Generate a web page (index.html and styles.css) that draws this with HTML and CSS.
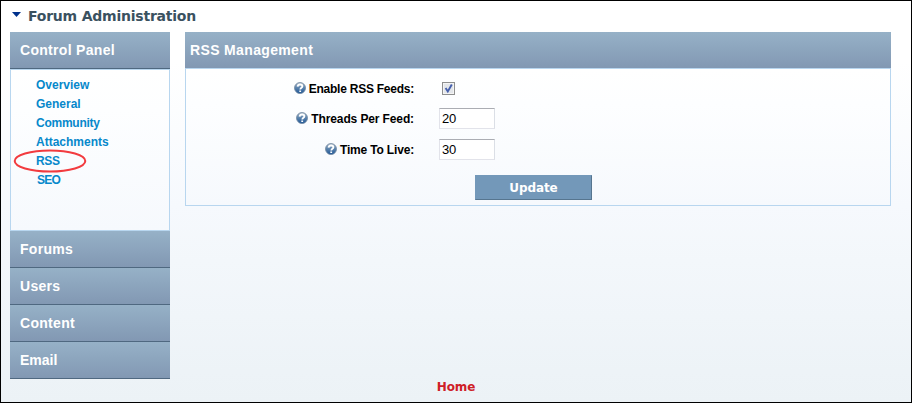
FILE: index.html
```html
<!DOCTYPE html>
<html lang="en">
<head>
<meta charset="utf-8">
<title>Forum Administration</title>
<link rel="stylesheet" href="styles.css">
</head>
<body>
<svg width="0" height="0" class="defs" aria-hidden="true">
  <defs>
    <linearGradient id="ball" x1="0" y1="0" x2="0" y2="1">
      <stop offset="0" stop-color="#b3c0cc"/>
      <stop offset=".4" stop-color="#668bb1"/>
      <stop offset="1" stop-color="#1c5596"/>
    </linearGradient>
    <symbol id="help" viewBox="0 0 12 12">
      <circle cx="6" cy="6" r="5.5" fill="url(#ball)" stroke="#71889f" stroke-width=".8"/>
      <path d="M3.6 4.6C3.8 3 4.8 2.5 6.1 2.5c1.4 0 2.3.7 2.3 1.8 0 1.5-2.1 1.5-2.1 3.2M6.2 8.5v1.5" fill="none" stroke="#fff" stroke-width="1.8"/>
    </symbol>
  </defs>
</svg>
<div class="page">
  <h1 class="title"><svg class="arrow" width="9" height="5" viewBox="0 0 9 5"><path d="M0 0h9L4.5 5z" fill="#00318c"/></svg><span>Forum Administration</span></h1>
  <div class="columns">
    <nav class="sidebar">
      <div class="bar">Control Panel</div>
      <ul class="menu">
        <li><a>Overview</a></li>
        <li><a>General</a></li>
        <li><a class="community">Community</a></li>
        <li><a>Attachments</a></li>
        <li class="marked"><a class="rss">RSS</a>
          <svg class="ring" width="74" height="24" viewBox="0 0 74 24"><ellipse cx="37" cy="12" rx="35.3" ry="10.5" fill="none" stroke="#f23b3f" stroke-width="2"/></svg></li>
        <li><a class="seo">SEO</a></li>
      </ul>
      <div class="bar">Forums</div>
      <div class="bar">Users</div>
      <div class="bar">Content</div>
      <div class="bar email">Email</div>
    </nav>
    <main class="panel">
      <h2 class="panel-head">RSS Management</h2>
      <form class="panel-body">
        <div class="row row-check">
          <label><svg class="help"><use href="#help"/></svg><span class="enable">Enable RSS Feeds:</span></label>
          <span class="check"><svg width="13" height="13" viewBox="0 0 13 13"><path d="M3.6 6l2.2 3.4L9.8 2.5" fill="none" stroke="#4660ad" stroke-width="1.9"/></svg></span>
        </div>
        <div class="row">
          <label><svg class="help"><use href="#help"/></svg><span class="threads">Threads Per Feed:</span></label>
          <input type="text" value="20">
        </div>
        <div class="row">
          <label><svg class="help"><use href="#help"/></svg><span class="time">Time To Live:</span></label>
          <input type="text" value="30">
        </div>
        <button type="button" class="update">Update</button>
      </form>
    </main>
  </div>
  <footer><a>Home</a></footer>
</div>
</body>
</html>
```
FILE: styles.css
```css
* { box-sizing: border-box; }
body { margin: 0; font-family: "Liberation Sans", Arial, sans-serif; }
.defs { position: absolute; }
.page {
  width: 912px;
  height: 403px;
  border: 1px solid #000;
  padding: 0 9px;
  display: flex;
  flex-direction: column;
  background: linear-gradient(#fff 0, #fff 60px, #f6f9fd 205px, #edf3f7 370px, #ecf2f6 100%);
}
.title {
  margin: 0;
  height: 31px;
  display: flex;
  align-items: flex-start;
  padding: 1px 0 0 2px;
  font: bold 14px/28px "DejaVu Sans", Verdana, sans-serif;
  color: #3a515f;
  letter-spacing: -0.22px;
  white-space: nowrap;
}
.arrow { margin: 10px 7px 0 0; }
.columns { display: flex; gap: 15px; height: 347px; align-items: flex-start; }
.sidebar { width: 160px; }
.bar {
  height: 37px;
  padding-left: 10px;
  border-bottom: 1px solid #4f6880;
  background: linear-gradient(#96b1c7, #8298b3);
  color: #fff;
  font: bold 14px/36px "Liberation Sans", Arial, sans-serif;
  letter-spacing: 0.3px;
}
.email { letter-spacing: 0; }
.menu {
  list-style: none;
  margin: 0;
  height: 162px;
  padding: 6px 0 0 25px;
  border: 1px solid #b8d6ef;
  background: linear-gradient(#fff, #fdfeff 40px, #f6f9fd);
}
.menu li { height: 19px; font: bold 12px/19px "Liberation Sans", Arial, sans-serif; color: #0788cb; }
.community { letter-spacing: -0.25px; }
.rss, .seo { letter-spacing: -0.3px; }
.seo { padding-left: 1px; letter-spacing: -0.7px; }
.marked { position: relative; }
.ring { position: absolute; left: -23px; top: -3px; }
.panel { width: 706px; }
.panel-head {
  margin: 0;
  height: 36px;
  padding-left: 5px;
  background: linear-gradient(#96b1c7, #8298b3);
  color: #fff;
  font: bold 14px/36px "Liberation Sans", Arial, sans-serif;
  letter-spacing: 0.35px;
}
.panel-body {
  height: 138px;
  border: 1px solid #b8d6ef;
  padding-top: 5px;
  background: linear-gradient(#fff, #fdfeff 35px, #f6f9fd);
}
.row { display: flex; align-items: center; height: 31px; }
.row-check { height: 29px; }
.row label {
  width: 228px;
  margin-right: 25px;
  display: flex;
  justify-content: flex-end;
  align-items: center;
  font: bold 12px/16px "Liberation Sans", Arial, sans-serif;
  color: #000;
  white-space: nowrap;
}
.enable { letter-spacing: -0.24px; }
.threads { letter-spacing: -0.12px; }
.time { letter-spacing: -0.17px; }
.help { width: 12px; height: 12px; margin: 0 3px 2px 0; }
.row input {
  width: 56px;
  height: 21px;
  padding: 0 2px;
  border: 1px solid #e2e3ea;
  border-top-color: #abadb3;
  border-right-color: #dbdfe6;
  background: #fff;
  font: 13px "Liberation Sans", Arial, sans-serif;
  letter-spacing: -0.2px;
  color: #000;
}
.check {
  width: 13px;
  height: 13px;
  margin-left: 3px;
  display: flex;
  border: 1px solid #8e8f8f;
  background: #e3e6ea;
  box-shadow: inset 0 0 0 1px #f4f4f4;
}
.check svg { margin: -1px; }
.update {
  display: block;
  width: 117px;
  height: 25px;
  margin: 10px 0 0 289px;
  padding: 0;
  border: 1px solid #7398b9;
  border-right-color: #56758f;
  border-bottom-color: #56758f;
  background: #7398b9;
  color: #fff;
  font: bold 12px/20px "DejaVu Sans", Verdana, sans-serif;
  letter-spacing: -0.1px;
}
footer { text-align: center; padding-top: 1px; font: bold 12px/14px "DejaVu Sans", Verdana, sans-serif; letter-spacing: -0.1px; color: #cf2027; }
```
